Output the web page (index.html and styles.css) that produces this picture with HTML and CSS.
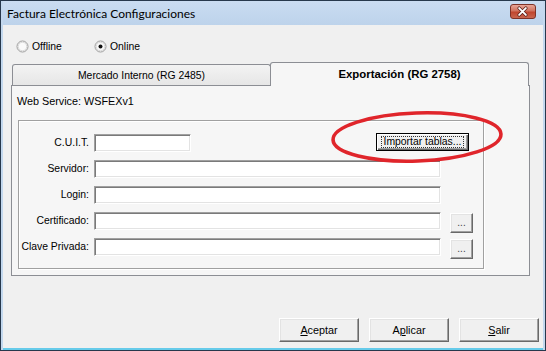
FILE: index.html
```html
<!DOCTYPE html>
<html>
<head>
<meta charset="utf-8">
<link rel="stylesheet" href="styles.css">
</head>
<body>
<div class="window">
  <div class="titlebar">
    <span class="title">Factura Electrónica Configuraciones</span>
    <span class="close">
      <svg width="26" height="15" viewBox="0 0 26 15">
        <path d="M9.5 4 L16.5 11 M16.5 4 L9.5 11" stroke="#5a1f18" stroke-width="3.6" stroke-linecap="round"/>
        <path d="M9.5 4 L16.5 11 M16.5 4 L9.5 11" stroke="#ffffff" stroke-width="2" stroke-linecap="round"/>
      </svg>
    </span>
  </div>
  <div class="client">
    <div class="radios">
      <label class="radio"><svg class="rb" width="13" height="13" viewBox="0 0 13 13"><circle cx="6.5" cy="6.5" r="5.5" fill="#fafafa" stroke="#9a9a9a"/><circle cx="6.5" cy="6.5" r="4.3" fill="none" stroke="#d8d8d8"/></svg>Offline</label>
      <label class="radio"><svg class="rb" width="13" height="13" viewBox="0 0 13 13"><circle cx="6.5" cy="6.5" r="5.5" fill="#fafafa" stroke="#9a9a9a"/><circle cx="6.5" cy="6.5" r="4.3" fill="none" stroke="#d8d8d8"/><circle cx="6.5" cy="6.5" r="2" fill="#111"/></svg>Online</label>
    </div>
    <div class="tabs">
      <div class="tabstrip">
        <div class="tab">Mercado Interno (RG 2485)</div>
        <div class="tab active">Exportación (RG 2758)</div>
      </div>
      <div class="panel">
        <div class="ws">Web Service: WSFEXv1</div>
        <div class="group">
          <div class="form">
            <span class="lbl">C.U.I.T.</span>
            <div class="row1">
              <span class="input cuit"></span>
              <button class="btn import"><span class="focus">Importar tablas...</span></button>
            </div>
            <span class="lbl">Servidor:</span>
            <span class="input"></span>
            <span class="lbl">Login:</span>
            <span class="input"></span>
            <span class="lbl">Certificado:</span>
            <span class="input"></span>
            <button class="btn dots">...</button>
            <span class="lbl">Clave Privada:</span>
            <span class="input"></span>
            <button class="btn dots">...</button>
          </div>
          <svg class="mark" width="180" height="60" viewBox="0 0 180 60">
            <ellipse cx="90" cy="30" rx="84" ry="24" transform="rotate(-2 90 30)" fill="none" stroke="#e0252b" stroke-width="3.6"/>
          </svg>
        </div>
      </div>
    </div>
    <div class="buttons">
      <button class="btn big"><u>A</u>ceptar</button>
      <button class="btn big">A<u>p</u>licar</button>
      <button class="btn big"><u>S</u>alir</button>
    </div>
  </div>
</div>
</body>
</html>
```
FILE: styles.css
```css
* { box-sizing: border-box; }
html, body { margin: 0; padding: 0; }
body {
  width: 546px;
  height: 351px;
  overflow: hidden;
  background: #fff;
  font-family: "Liberation Sans", Arial, sans-serif;
  font-size: 10.4px;
  color: #000;
}
.window {
  width: 546px;
  height: 351px;
  border: 1px solid #27384c;
  background: #c3d8ee;
  display: flex;
  flex-direction: column;
  padding: 0 2px;
}
.titlebar {
  height: 24px;
  flex: none;
  display: flex;
  align-items: center;
  padding-left: 4px;
  background: linear-gradient(#cadcf1, #bdd3eb);
}
.title {
  flex: 1;
  font-family: Lato, "Liberation Sans", sans-serif;
  font-size: 12px;
  color: #000;
}
.close {
  width: 26px;
  height: 15px;
  margin-right: 7px;
  margin-top: -3px;
  border: 1px solid #7e3227;
  border-radius: 3px;
  background: linear-gradient(#e9a597, #d0735f 45%, #c0462f 55%, #c9664f);
  display: flex;
}
.close svg { margin: -1px 0 0 -1px; }
.client {
  flex: 1;
  background: #f0f0f0;
  border-bottom: 2px solid #66cbea;
  padding: 15px 4px 6px 8px;
  display: flex;
  flex-direction: column;
}
.radios {
  display: flex;
  height: 13px;
  margin-left: 5px;
}
.radio {
  width: 78px;
  display: flex;
  align-items: center;
  gap: 3px;
  line-height: 13px;
}
.tabs {
  margin-top: 9px;
  margin-right: 9px;
}
.tabstrip {
  height: 23px;
  display: flex;
  align-items: flex-end;
  padding-left: 1px;
}
.tab {
  width: 259px;
  height: 21px;
  border: 1px solid #8c8e94;
  border-bottom: none;
  border-radius: 3px 3px 0 0;
  background: linear-gradient(#f3f3f3, #e6e6e6);
  display: flex;
  align-items: center;
  justify-content: center;
  padding-top: 1px;
}
.tab.active {
  width: 259px;
  height: 24px;
  margin-bottom: -1px;
  margin-left: -1px;
  position: relative;
  z-index: 1;
  background: #f6f6f6;
  font-weight: bold;
  font-size: 11.4px;
  padding-top: 0;
  padding-bottom: 2px;
}
.panel {
  height: 191px;
  border: 1px solid #8c8e94;
  background: #f6f6f6;
  padding: 9px 5px;
}
.ws {
  line-height: 13px;
  font-size: 10.8px;
}
.group {
  position: relative;
  margin: 12px 0 0 1px;
  width: 466px;
  height: 149px;
  border: 1px solid #a0a0a0;
  box-shadow: inset 1px 1px #fff, 1px 1px #fff;
  padding: 13px 0 0 0;
}
.form {
  display: grid;
  grid-template-columns: 75px 356px 23px;
  grid-auto-rows: 18px;
  row-gap: 8px;
}
.lbl {
  grid-column: 1;
  text-align: right;
  padding-right: 5px;
  line-height: 18px;
  white-space: nowrap;
}
.input {
  grid-column: 2;
  width: 347px;
  height: 18px;
  background: #fff;
  border: 1px solid;
  border-color: #a0a0a0 #fff #fff #a0a0a0;
  box-shadow: inset 1px 1px #7a7a7a, inset -1px -1px #e3e3e3;
}
.input.cuit { width: 97px; }
.row1 {
  grid-column: 2 / 4;
  display: flex;
  align-items: flex-start;
}
.btn {
  font: inherit;
  color: #000;
  background: #f0f0f0;
  border: 1px solid;
  border-color: #fff #696969 #696969 #fff;
  box-shadow: inset -1px -1px #a0a0a0, inset 1px 1px #e3e3e3;
  padding: 0;
  margin: 0;
  display: flex;
  align-items: center;
  justify-content: center;
}
.import {
  width: 93px;
  height: 18px;
  margin-left: auto;
  margin-right: 4px;
  margin-top: -1px;
  border-color: #000;
  box-shadow: inset 1px 1px #fff, inset -1px -1px #696969, inset -2px -2px #a0a0a0;
}
.focus {
  border: 1px dotted #333;
  padding: 0 2px;
  line-height: 10px;
}
.dots {
  grid-column: 3;
  width: 23px;
  height: 20px;
  margin-top: 1px;
  align-items: flex-end;
  padding-bottom: 4px;
  font-size: 10px;
  color: #444;
}
.mark {
  position: absolute;
  left: 308px;
  top: -14px;
}
.buttons {
  margin-top: auto;
  display: flex;
  justify-content: flex-end;
  gap: 10px;
}
.big {
  width: 80px;
  height: 24px;
  font-size: 10.8px;
}
```
